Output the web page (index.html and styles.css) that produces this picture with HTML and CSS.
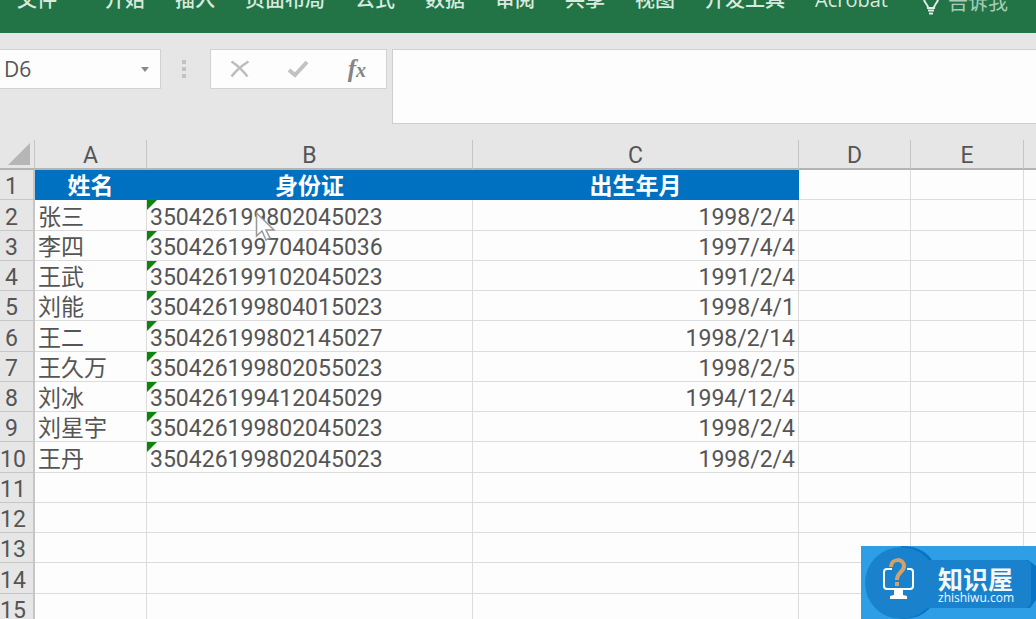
FILE: index.html
```html
<!DOCTYPE html>
<html lang="zh-CN">
<head>
<meta charset="utf-8">
<title>Excel</title>
<link rel="stylesheet" href="styles.css">
</head>
<body>
<header class="ribbon">
  <nav class="tabs">
    <button class="tab tab-file">文件</button>
    <button class="tab">开始</button>
    <button class="tab">插入</button>
    <button class="tab">页面布局</button>
    <button class="tab">公式</button>
    <button class="tab">数据</button>
    <button class="tab">审阅</button>
    <button class="tab">共享</button>
    <button class="tab">视图</button>
    <button class="tab">开发工具</button>
    <button class="tab">Acrobat</button>
    <button class="tab tell-me">
      <svg class="bulb" viewBox="0 0 18 24" width="18" height="24" fill="none" stroke="currentColor" stroke-width="2"><path d="M6 17C6 13 2 12 2 8a7 7 0 0 1 14 0c0 4-4 5-4 9zM6 19.500h6M7 22.500h4"/></svg>
      <span class="tell-text">告诉我</span>
    </button>
  </nav>
</header>
<section class="formula-row">
  <div class="name-box">
    <input class="name-input" type="text" value="D6" aria-label="名称框">
    <button class="name-drop" aria-label="展开"><svg class="drop-mark" viewBox="0 0 8 5" width="8" height="5"><path d="M0 0h8L4 5z" fill="#888"/></svg></button>
  </div>
  <svg class="grip" viewBox="0 0 6 20" width="6" height="20" fill="#c2c2c2"><rect x="1" y="1" width="4" height="4"/><rect x="1" y="8" width="4" height="4"/><rect x="1" y="15" width="4" height="4"/></svg>
  <div class="formula-tools">
    <button class="tool" aria-label="取消"><svg viewBox="0 0 20 18" width="20" height="18" fill="none" stroke="#bdbdbd" stroke-width="2.500"><path d="M1.500 1.500Q10 7 17.500 16.500M18.500 1.500Q8 8 1.500 16.500"/></svg></button>
    <button class="tool" aria-label="输入"><svg viewBox="0 0 22 18" width="22" height="18" fill="none" stroke="#c2c2c2" stroke-width="4"><path d="M2 10l6 5L20 2"/></svg></button>
    <button class="tool tool-fx" aria-label="插入函数"><i>f</i><i class="fx-x">x</i></button>
  </div>
  <textarea class="formula-input" aria-label="编辑栏"></textarea>
</section>
<main class="sheet">
  <table class="grid">
    <colgroup><col class="c-num"><col class="c-a"><col class="c-b"><col class="c-b"><col class="c-a"><col class="c-e"><col></colgroup>
    <thead>
      <tr><th class="corner"><svg class="corner-mark" viewBox="0 0 22 22" width="22" height="22"><path d="M22 0v22H0z" fill="#b6b6b6"/></svg></th><th>A</th><th>B</th><th>C</th><th>D</th><th>E</th><th></th></tr>
    </thead>
    <tbody>
      <tr class="title"><th>1</th><td>姓名</td><td>身份证</td><td>出生年月</td><td></td><td></td><td></td></tr>
      <tr><th>2</th><td>张三</td><td class="id">350426199802045023</td><td class="date">1998/2/4</td><td></td><td></td><td></td></tr>
      <tr><th>3</th><td>李四</td><td class="id">350426199704045036</td><td class="date">1997/4/4</td><td></td><td></td><td></td></tr>
      <tr><th>4</th><td>王武</td><td class="id">350426199102045023</td><td class="date">1991/2/4</td><td></td><td></td><td></td></tr>
      <tr><th>5</th><td>刘能</td><td class="id">350426199804015023</td><td class="date">1998/4/1</td><td></td><td></td><td></td></tr>
      <tr><th>6</th><td>王二</td><td class="id">350426199802145027</td><td class="date">1998/2/14</td><td></td><td></td><td></td></tr>
      <tr><th>7</th><td>王久万</td><td class="id">350426199802055023</td><td class="date">1998/2/5</td><td></td><td></td><td></td></tr>
      <tr><th>8</th><td>刘冰</td><td class="id">350426199412045029</td><td class="date">1994/12/4</td><td></td><td></td><td></td></tr>
      <tr><th>9</th><td>刘星宇</td><td class="id">350426199802045023</td><td class="date">1998/2/4</td><td></td><td></td><td></td></tr>
      <tr><th>10</th><td>王丹</td><td class="id">350426199802045023</td><td class="date">1998/2/4</td><td></td><td></td><td></td></tr>
      <tr><th>11</th><td></td><td></td><td></td><td></td><td></td><td></td></tr>
      <tr><th>12</th><td></td><td></td><td></td><td></td><td></td><td></td></tr>
      <tr><th>13</th><td></td><td></td><td></td><td></td><td></td><td></td></tr>
      <tr><th>14</th><td></td><td></td><td></td><td></td><td></td><td></td></tr>
      <tr><th>15</th><td></td><td></td><td></td><td></td><td></td><td></td></tr>
    </tbody>
  </table>
  <svg class="pointer" viewBox="0 0 22 32" width="22" height="32"><path d="M1.500 2v23l5.500-5 4 9 4-2-4-8h8z" fill="#fdfdfd" stroke="#999" stroke-width="1.500"/></svg>
</main>
<aside class="brand">
  <svg class="brand-art" viewBox="0 0 175 73" width="175" height="73">
    <path d="M40 0c15 0 25 5 31 14h96l8 6v34l-6 8H69c-7 7-14 11-29 11z" fill="#0873c7"/>
    <rect x="40" y="14" width="130" height="48" rx="6" fill="#1a82cc"/>
    <circle cx="40" cy="37" r="36" fill="#1a82cc"/>
    <path d="M31 23h-5a3 3 0 0 0-3 3v14a3 3 0 0 0 3 3h23a3 3 0 0 0 3-3V26a3 3 0 0 0-3-3h-3" fill="none" stroke="#fff" stroke-width="2"/>
    <path d="M33 43h9v6l4 1v3H29v-3l4-1z" fill="#fff"/>
    <path d="M30 21c0-9 13-9 13-1 0 6-7 6-7 14" fill="none" stroke="#d3a16c" stroke-width="4"/>
    <rect x="34" y="36" width="4" height="4" fill="#d3a16c"/>
  </svg>
  <div class="brand-text"><strong class="brand-name">知识屋</strong><span class="brand-url">zhishiwu.com</span></div>
</aside>
</body>
</html>
```
FILE: styles.css
```css
* { box-sizing: border-box; }
body {
  margin: 0;
  height: 100vh;
  overflow: hidden;
  display: flex;
  flex-direction: column;
  background: #e6e6e6;
  color: #555;
  font-family: Roboto, "Noto Sans CJK SC", sans-serif;
}
button, input, textarea { font: inherit; color: inherit; border: 0; padding: 0; margin: 0; background: none; }

.ribbon { flex: none; height: 33px; overflow: hidden; background: #227447; }
.tabs { display: flex; align-items: flex-start; gap: 30px; margin-top: -12px; padding-left: 17px; }
.tab { flex: none; font: 500 20px/24px "Open Sans", "Noto Sans CJK SC", sans-serif; color: #d8eadf; white-space: nowrap; }
.tab-file { margin-right: 18px; }
.tell-me { display: flex; gap: 8px; color: #a9cdb8; padding-top: 3px; margin-left: 4px; }
.bulb { color: #e0eee5; }
.tell-text { font-weight: 400; }

.formula-row { flex: none; display: flex; align-items: flex-start; padding-top: 16px; height: 107px; }
.name-box { display: flex; align-items: center; width: 161px; height: 40px; background: #fdfdfd; border: 1px solid #d2d2d2; border-left: 0; }
.name-input { flex: 1; min-width: 0; padding-left: 4px; font: 21px/38px "Open Sans", sans-serif; }
.name-drop { display: flex; align-items: center; justify-content: center; width: 30px; height: 38px; }
.grip { margin: 10px 23px 0 20px; }
.formula-tools { display: flex; justify-content: space-around; align-items: center; width: 177px; height: 40px; background: #fdfdfd; border: 1px solid #d2d2d2; }
.tool { display: flex; justify-content: center; align-items: center; width: 40px; height: 38px; }
.tool-fx { font: bold 25px/38px "Liberation Serif", serif; color: #858585; align-items: baseline; }
.fx-x { font-size: 20px; }
.formula-input { flex: 1; height: 75px; margin-left: 5px; resize: none; background: #fdfdfd; border: 1px solid #cfcfcf; border-right: 0; }

.sheet { position: relative; flex: 1; min-height: 0; overflow: hidden; }
.grid { width: 100%; table-layout: fixed; border-collapse: separate; border-spacing: 0; font-size: 23px; line-height: 25px; }
.c-num { width: 35px; }
.c-a { width: 112px; }
.c-b { width: 326px; }
.c-e { width: 113px; }
.grid th { font-weight: 400; padding: 4px 0 0; }
.grid thead th { height: 30px; border-right: 1px solid #c4c4c4; border-bottom: 2px solid #b4b4b4; line-height: 24px; }
.grid .corner { text-align: right; vertical-align: bottom; padding: 0 4px 3px 0; }
.corner-mark { display: block; margin-left: auto; }
.grid tbody tr { height: 30px; }
.grid tbody tr:nth-child(4n+2) { height: 31px; }
.grid tbody th { background: #e6e6e6; border-right: 2px solid #c6c6c6; border-bottom: 1px solid #c6c6c6; padding-right: 10px; }
.grid td { position: relative; background: #fdfdfd; border-right: 1px solid #dcdcdc; border-bottom: 1px solid #dcdcdc; padding: 4px 3px 0; white-space: nowrap; }
.grid tr > :last-child { border-right: 0; }
.grid .title td { text-align: center; font-weight: 700; color: #fff; }
.grid .title td:nth-child(-n+4) { background: #0070c0; border-color: #0070c0; }
.grid .date { text-align: right; }
.id::before { content: ""; position: absolute; left: 0; top: 0; border-top: 10px solid #0b850b; border-right: 10px solid transparent; }
.pointer { position: absolute; left: 255px; top: 71px; }

.brand { position: fixed; right: 0; bottom: 0; background: #2e9ee6; color: #f2f8fc; }
.brand-art { display: block; }
.brand-text { position: absolute; left: 77px; top: 19px; display: flex; flex-direction: column; }
.brand-name { font: 700 25px/26px "Noto Sans CJK SC", sans-serif; }
.brand-url { font: 12px/14px "Open Sans", sans-serif; }
```
